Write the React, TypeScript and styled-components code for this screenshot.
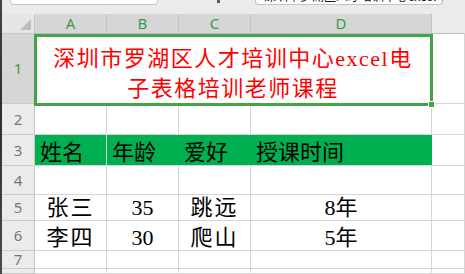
import React from 'react';
import styled, { createGlobalStyle } from 'styled-components';

const GlobalStyle = createGlobalStyle`
  html, body {
    margin: 0;
    padding: 0;
    background: #ffffff;
  }
  body {
    font-family: 'Liberation Serif', 'Noto Sans CJK SC', serif;
  }
`;

const selectionGreen = '#41a447';
const gridLine = '#d6d6d6';

const columns = ['A', 'B', 'C', 'D'];

const headers = ['姓名', '年龄', '爱好', '授课时间'];

const people = [
  { name: '张三', age: '35', hobby: '跳远', years: '8年' },
  { name: '李四', age: '30', hobby: '爬山', years: '5年' },
];

const App = () => (
  <Window>
    <GlobalStyle />
    <Strip />
    <Main>
      <Toolbar>
        <NameBox />
        <Chevron />
        <FormulaBox>
          <FormulaText>深圳市罗湖区人才培训中心excel电子表格培训老师课程</FormulaText>
        </FormulaBox>
      </Toolbar>
      <Sheet>
        <Corner>
          <CornerTriangle />
        </Corner>
        {columns.map((c) => (
          <ColHead key={c} $active>
            {c}
          </ColHead>
        ))}
        <ColHead />

        <RowHead $active>1</RowHead>
        <TitleCell>
          深圳市罗湖区人才培训中心excel电
          <br />
          子表格培训老师课程
          <Selection>
            <Handle />
          </Selection>
        </TitleCell>
        <Cell />

        <RowHead>2</RowHead>
        {columns.map((c) => (
          <Cell key={c} />
        ))}
        <Cell />

        <RowHead>3</RowHead>
        {headers.map((h) => (
          <HeadCell key={h}>{h}</HeadCell>
        ))}
        <Cell />

        <RowHead>4</RowHead>
        {columns.map((c) => (
          <Cell key={c} />
        ))}
        <Cell />

        {people.map((p, i) => (
          <React.Fragment key={p.name}>
            <RowHead>{i + 5}</RowHead>
            <DataCell $spaced>{p.name}</DataCell>
            <DataCell>{p.age}</DataCell>
            <DataCell $spaced>{p.hobby}</DataCell>
            <DataCell>{p.years}</DataCell>
            <Cell />
          </React.Fragment>
        ))}

        <RowHead>7</RowHead>
        {columns.map((c) => (
          <Cell key={c} />
        ))}
        <Cell />

        <RowHead $cut>8</RowHead>
        {columns.map((c) => (
          <Cell key={c} />
        ))}
        <Cell />
      </Sheet>
    </Main>
  </Window>
);

export default App;

const Window = styled.div`
  display: flex;
  width: 465px;
  height: 274px;
  overflow: hidden;
  background: #ffffff;
`;

const Strip = styled.div`
  flex: 0 0 2px;
  background: linear-gradient(180deg, #3c4a3a 0%, #2e2e2e 40%, #4b4b4b 100%);
`;

const Main = styled.div`
  flex: 1 1 auto;
  display: flex;
  flex-direction: column;
  min-width: 0;
`;

const Toolbar = styled.div`
  display: flex;
  align-items: flex-start;
  height: 14px;
  flex: 0 0 14px;
  background: #ebebeb;
`;

const NameBox = styled.div`
  box-sizing: border-box;
  width: 148px;
  height: 5px;
  margin-left: 8px;
  background: #ffffff;
  border: 1px solid #c4c4c4;
  border-top: none;
  border-radius: 0 0 4px 4px;
`;

const Chevron = styled.div`
  width: 3px;
  height: 3px;
  margin-left: 59px;
  background: #5a5a5a;
`;

const FormulaBox = styled.div`
  box-sizing: border-box;
  width: 188px;
  height: 5px;
  margin-left: 35px;
  padding-left: 8px;
  background: #ffffff;
  border: 1px solid #c4c4c4;
  border-top: none;
  border-radius: 0 0 4px 4px;
  overflow: hidden;
`;

const FormulaText = styled.div`
  margin-top: -11px;
  font-family: 'Noto Sans CJK SC', sans-serif;
  font-size: 12px;
  line-height: 13px;
  color: #111111;
  white-space: nowrap;
`;

const Sheet = styled.div`
  flex: 1 1 auto;
  display: grid;
  grid-template-columns: 33px 72px 72px 72px 181px 1fr;
  grid-template-rows: 20px 70px 31px 31px 29px 26px 30px 18px 1fr;
  overflow: hidden;
`;

const Corner = styled.div`
  position: relative;
  box-sizing: border-box;
  background: #e6e6e6;
  border-right: 1px solid #c8c8c8;
  border-bottom: 1px solid #c8c8c8;
`;

const CornerTriangle = styled.div`
  position: absolute;
  right: 3px;
  bottom: 3px;
  width: 0;
  height: 0;
  border-left: 11px solid transparent;
  border-bottom: 11px solid #bcbcbc;
`;

const ColHead = styled.div<{ $active?: boolean }>`
  box-sizing: border-box;
  display: flex;
  align-items: center;
  justify-content: center;
  background: ${({ $active }) => ($active ? '#d6d6d6' : '#ebebeb')};
  border-right: 1px solid ${({ $active }) => ($active ? '#c2c2c2' : '#ebebeb')};
  border-bottom: 1px solid #bdbdbd;
  color: ${({ $active }) => ($active ? '#3a9a45' : '#666666')};
  font-family: 'Noto Sans', sans-serif;
  font-size: 15px;
  line-height: 1;
`;

const RowHead = styled.div<{ $active?: boolean; $cut?: boolean }>`
  box-sizing: border-box;
  display: flex;
  align-items: ${({ $cut }) => ($cut ? 'flex-start' : 'center')};
  justify-content: center;
  padding-top: ${({ $cut }) => ($cut ? '1px' : '0')};
  overflow: ${({ $cut }) => ($cut ? 'hidden' : 'visible')};
  background: ${({ $active }) => ($active ? '#d6d6d6' : '#ebebeb')};
  border-right: 1px solid #c8c8c8;
  border-bottom: 1px solid #cbcbcb;
  color: ${({ $active }) => ($active ? '#3a9a45' : '#777777')};
  font-family: 'Noto Sans', sans-serif;
  font-size: 15px;
  line-height: 15px;
`;

const Cell = styled.div`
  box-sizing: border-box;
  border-right: 1px solid ${gridLine};
  border-bottom: 1px solid ${gridLine};
`;

const TitleCell = styled(Cell)`
  position: relative;
  grid-column: span 4;
  padding-top: 10px;
  text-align: center;
  color: #ff0000;
  font-size: 22px;
  line-height: 30px;
  letter-spacing: 1.5px;
`;

const Selection = styled.div`
  position: absolute;
  top: 0;
  left: -1px;
  right: -2px;
  bottom: -3px;
  border: 3px solid ${selectionGreen};
  pointer-events: none;
`;

const Handle = styled.div`
  position: absolute;
  right: -5px;
  bottom: -5px;
  width: 5px;
  height: 5px;
  background: ${selectionGreen};
  border: 1px solid #ffffff;
`;

const HeadCell = styled.div`
  box-sizing: border-box;
  display: flex;
  align-items: flex-end;
  padding: 0 0 1px 5px;
  background: #00b050;
  border-bottom: 1px solid ${gridLine};
  color: #000000;
  font-size: 22px;
  line-height: 22px;

  &:nth-child(4n + 1) {
    border-right: 1px solid ${gridLine};
  }
`;

const DataCell = styled(Cell)<{ $spaced?: boolean }>`
  display: flex;
  align-items: flex-end;
  justify-content: center;
  padding-bottom: 1px;
  color: #000000;
  font-size: 22px;
  line-height: 22px;
  letter-spacing: ${({ $spaced }) => ($spaced ? '2px' : '0')};
`;
